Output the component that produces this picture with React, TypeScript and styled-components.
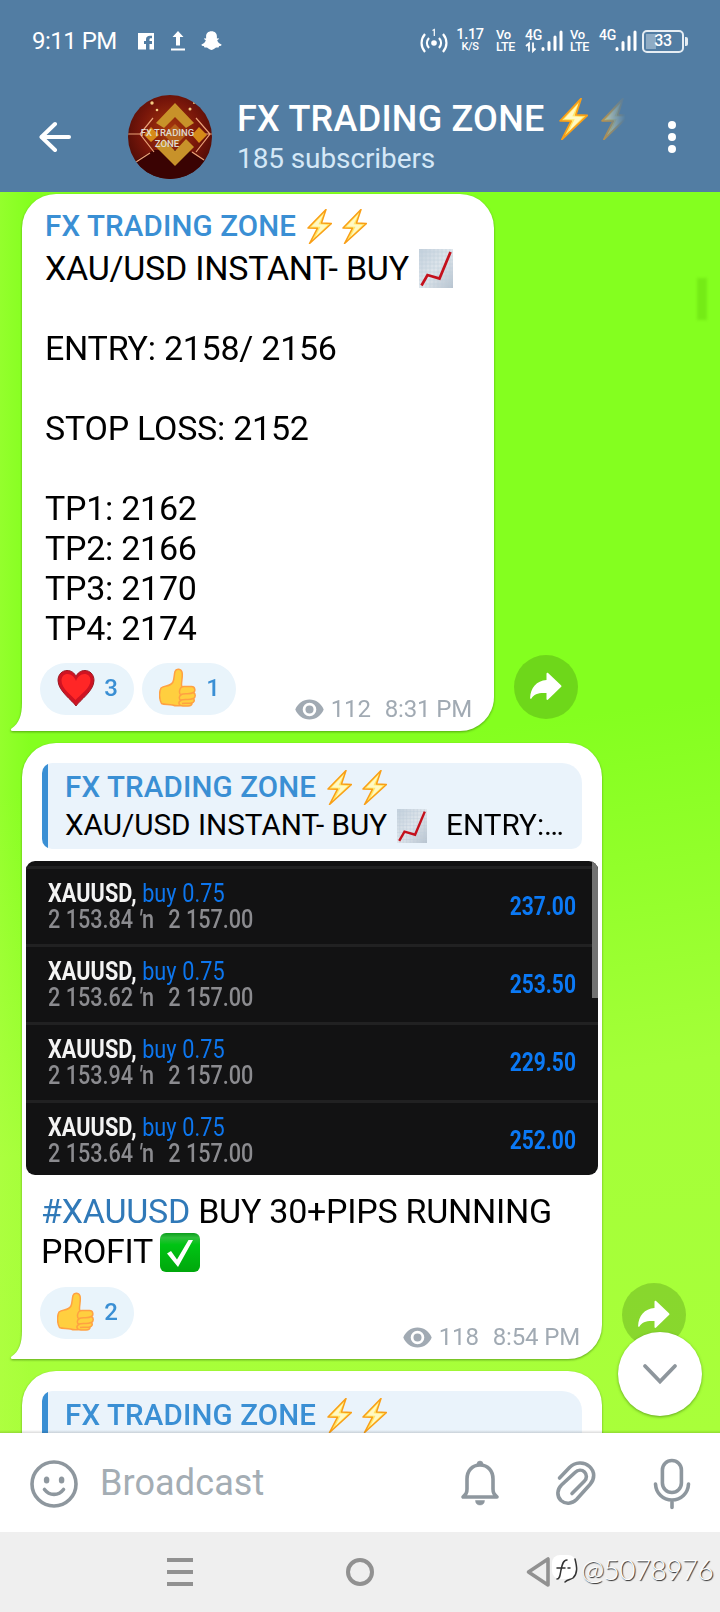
import type { ReactNode } from "react"
import styled, { createGlobalStyle } from "styled-components"

const GlobalStyle = createGlobalStyle`
* { box-sizing: border-box; }
body {
  margin: 0;
  font-family: Roboto, "Liberation Sans", sans-serif;
}
svg { display: block; flex: none; }
`

const Screen = styled.div`
display: flex;
flex-direction: column;
width: 720px;
height: 1612px;
overflow: hidden;
`

/* header */

const Header = styled.header`
height: 192px;
flex: none;
background: #527da3;
color: #fff;
`

const StatusBar = styled.div`
display: flex;
align-items: center;
height: 82px;
padding: 0 36px 0 32px;
`

const Clock = styled.span`
font-size: 24px;
line-height: 28px;
letter-spacing: -0.5px;
width: 105px;
`

const StatusIcons = styled.div`
display: flex;
align-items: center;
gap: 15px;
`

const StatusRight = styled.div`
display: flex;
align-items: center;
margin-left: auto;
height: 26px;
`

const Stack = styled.div<{ $w: number; $ml?: number }>`
display: flex;
flex-direction: column;
width: ${p => p.$w}px;
height: 24px;
margin-left: ${p => p.$ml ?? 0}px;
font-weight: 500;
white-space: nowrap;
`

const StackLine = styled.div<{ $size: number; $center?: boolean }>`
align-self: ${p => p.$center ? "center" : "flex-start"};
font-size: ${p => p.$size}px;
line-height: 12px;
letter-spacing: -0.3px;
`

const Battery = styled.div`
position: relative;
display: flex;
align-items: center;
justify-content: center;
width: 42px;
height: 23px;
margin-left: 5px;
border: 2px solid #e6edf3;
border-radius: 5px;
font-size: 16px;
font-weight: 500;
line-height: 16px;
letter-spacing: -0.3px;
background: linear-gradient(90deg, transparent 2px, #8eabc4 2px, #8eabc4 12px, transparent 12px) content-box;
padding: 2px 0;

&::after {
  content: "";
  position: absolute;
  left: 41px;
  top: 5px;
  width: 3px;
  height: 9px;
  border-radius: 0 2px 2px 0;
  background: #e6edf3;
}
`

const TitleBar = styled.div`
display: flex;
align-items: center;
height: 110px;
padding: 0 44px 0 39px;
`

const AvatarBox = styled.div`
margin: 0 25px 0 57px;
`

const TitleText = styled.div`
flex: 1;
padding-top: 1px;
`

const Title = styled.div`
display: flex;
align-items: center;
font-size: 36px;
font-weight: 500;
line-height: 42px;
letter-spacing: 0.25px;
white-space: nowrap;
`

const TitleBolts = styled.span`
display: flex;
gap: 13px;
margin-left: 14px;
`

const FadedBolt = styled.span`
mask-image: linear-gradient(90deg, rgba(0,0,0,0.65), transparent 85%);
`

const Subtitle = styled.div`
font-size: 28px;
line-height: 38px;
letter-spacing: -0.1px;
color: #d5e8f7;
`

/* messages */

const Chat = styled.main`
position: relative;
flex: none;
display: flex;
flex-direction: column;
gap: 12px;
height: 1241px;
padding: 2px 0 0 22px;
overflow: hidden;
background:
  linear-gradient(90deg, rgba(190,255,80,0.28), transparent 30px),
  linear-gradient(172deg, #84ff1f 0%, #84ff1f 45%, #a4ff38 72%, #a9ff3a 100%);

&::after {
  content: "";
  position: absolute;
  inset: auto 0 0 0;
  height: 3px;
  background: linear-gradient(transparent, rgba(0,0,0,0.14));
}
`

const WallpaperMark = styled.div`
position: absolute;
left: 697px;
top: 86px;
width: 10px;
height: 42px;
background: #70e514;
filter: blur(1.5px);
opacity: 0.75;
`

const MessageRow = styled.div`
display: flex;
align-items: flex-end;
gap: 20px;
flex: none;
`

const Bubble = styled.article<{ $w: number; $h: number }>`
position: relative;
display: flex;
flex-direction: column;
width: ${p => p.$w}px;
height: ${p => p.$h}px;
background: #fff;
border-radius: 34px 34px 34px 0;
filter: drop-shadow(0 1px 1px rgba(30,80,0,0.5));
`

const Tail = styled.svg`
position: absolute;
left: -12px;
bottom: 0;
`

const Author = styled.div`
display: flex;
align-items: center;
height: 40px;
font-size: 29.5px;
font-weight: 500;
line-height: 40px;
letter-spacing: 0.15px;
color: #3a8fd4;
white-space: nowrap;
`

const AuthorBolts = styled.span`
display: flex;
gap: 10px;
margin-left: 11px;
`

const SignalBody = styled.div`
padding: 12px 23px 0;
`

const Line = styled.div`
display: flex;
align-items: center;
height: 40px;
font-size: 34px;
line-height: 40px;
letter-spacing: -0.25px;
color: #000;
white-space: pre;
`

const SignalLines = styled.div`
padding-top: 2px;
`

const InlineEmoji = styled.span<{ $before?: number; $after?: number; $down?: number }>`
padding-top: ${p => p.$down ?? 0}px;
margin: 0 ${p => p.$after ?? 0}px 0 ${p => p.$before ?? 0}px;
`

const Footer = styled.footer`
display: flex;
align-items: flex-end;
margin-top: auto;
padding: 0 22px 4px 18px;
`

const Reaction = styled.button<{ $lift: number }>`
display: flex;
align-items: center;
justify-content: space-between;
width: 94px;
height: 52px;
margin: 0 8px ${p => p.$lift}px 0;
padding: 0 16px 3px 17px;
border: 0;
border-radius: 26px;
background: #e9f4fb;
font: 500 24px/28px Roboto, sans-serif;
color: #3a8fd4;
`

const Meta = styled.div`
display: flex;
align-items: center;
margin-left: auto;
font-size: 24px;
line-height: 36px;
letter-spacing: -0.15px;
color: #a1aab3;
white-space: pre;
`

const Views = styled.span`
margin: 0 14px 0 7px;
`

const ShareButton = styled.button`
display: flex;
align-items: center;
justify-content: center;
width: 64px;
height: 64px;
margin-bottom: 12px;
padding: 0;
border: 0;
border-radius: 50%;
background: rgba(50,100,10,0.26);
`

const Quote = styled.div`
flex: none;
height: 86px;
margin: 20px 20px 0;
padding: 4px 0 0 23px;
border-radius: 10px 20px 10px 10px;
background: linear-gradient(90deg, #3a8fd4 6px, #eaf3fb 6px);
`

const QuoteText = styled.div`
display: flex;
align-items: center;
height: 36px;
font-size: 29.7px;
line-height: 36px;
color: #000;
white-space: pre;
`

const Trades = styled.div`
position: relative;
flex: none;
height: 314px;
margin: 12px 4px 0;
padding-top: 5px;
border-radius: 9px;
overflow: hidden;
background: #121213;
`

const TradeRow = styled.div`
display: flex;
align-items: center;
justify-content: space-between;
height: 78px;
padding: 0 22px;
border-top: 3px solid #212122;
`

const Narrow = styled.div<{ $right?: boolean; $scale: number }>`
transform: scaleX(${p => p.$scale});
transform-origin: ${p => p.$right ? "right" : "left"};
white-space: pre;
`

const TradeName = styled.div`
font-size: 25px;
font-weight: 700;
line-height: 28px;
letter-spacing: 0.1px;
color: #f3f3f3;

span {
  font-weight: 400;
  color: #0d76ee;
}
`

const TradePrices = styled.div`
font-size: 25px;
font-weight: 500;
line-height: 26px;
margin-top: -1px;
color: #8b8b8f;

span { margin-left: 4px; }
`

const TradeProfit = styled.div`
font-size: 25px;
font-weight: 700;
line-height: 28px;
color: #0b79f5;
`

const ScrollThumb = styled.div`
position: absolute;
right: 0;
top: 0;
width: 6px;
height: 137px;
background: #727272;
`

const Caption = styled.div`
padding: 16px 19px 0;
`

const Hashtag = styled.span`
color: #3079b8;
`

const ScrollDown = styled.button`
position: absolute;
right: 18px;
bottom: 17px;
display: flex;
align-items: center;
justify-content: center;
width: 84px;
height: 84px;
padding: 0;
border: 0;
border-radius: 50%;
background: #fff;
box-shadow: 0 1px 3px rgba(30,80,0,0.5);
`

/* bottom bars */

const Composer = styled.div`
display: flex;
align-items: center;
flex: none;
height: 99px;
padding: 0 28px 0 29px;
background: #fff;
`

const Placeholder = styled.div`
flex: 1;
margin-left: 21px;
font-size: 36px;
line-height: 44px;
letter-spacing: 0.1px;
color: #a4adb4;
`

const Tools = styled.div`
display: flex;
align-items: center;
gap: 48px;

svg:last-child { margin-left: 4px; }
`

const NavBar = styled.nav`
display: flex;
align-items: center;
justify-content: space-between;
height: 80px;
flex: none;
padding: 0 168px 0 166px;
background: #efefef;
position: relative;
`

const Watermark = styled.div`
position: absolute;
left: 551px;
top: 19px;
display: flex;
align-items: center;
gap: 3px;
height: 36px;
font-family: Lato, sans-serif;
font-size: 28px;
font-weight: 300;
line-height: 36px;
letter-spacing: -0.6px;
color: #fff;
text-shadow: 1px 1px 1px #222;
white-space: nowrap;
`

const Bolt = ({ w = 25, h = 35 }: { w?: number; h?: number }) => (
  <svg width={w} height={h} viewBox="0 0 25 35" preserveAspectRatio="none">
    <path d="M19 .5 1 19l9.5.2L2.500 34.500 24.500 14.500l-10-.4z" fill="#ffe76a" stroke="#f99f17" strokeWidth="1.500" strokeLinejoin="round" />
    <path d="M16.500 5 4.500 17.500l9 .3-5 10L20.500 16l-9-.8z" fill="#fff9c4" />
  </svg>
)

const ChartEmoji = ({ w, h }: { w: number; h: number }) => (
  <svg width={w} height={h} viewBox="0 0 34 39" preserveAspectRatio="none">
    <defs>
      <linearGradient id="paper" x1="0" y1="0" x2="1" y2="1">
        <stop offset="0" stopColor="#c3d0dc" />
        <stop offset=".5" stopColor="#dfe6ec" />
        <stop offset="1" stopColor="#b7c3cf" />
      </linearGradient>
    </defs>
    <rect width="34" height="39" fill="url(#paper)" />
    <path d="M3 0v39M7 0v39M11 0v39M15 0v39M19 0v39M23 0v39M27 0v39M31 0v39M0 3h34M0 7h34M0 11h34M0 15h34M0 19h34M0 23h34M0 27h34M0 31h34M0 35h34" stroke="#bfcddb" strokeWidth=".5" />
    <path d="M2.500 36.500 8.500 26 20.500 29.500 31.500 3" fill="none" stroke="#c4101c" strokeWidth="2.700" />
  </svg>
)

const CheckEmoji = () => (
  <svg width="40" height="39" viewBox="0 0 40 39">
    <defs>
      <linearGradient id="tick" x1="0" y1="0" x2="0" y2="1">
        <stop offset="0" stopColor="#0c9d1c" />
        <stop offset=".12" stopColor="#2fbf3c" />
        <stop offset=".3" stopColor="#00c414" />
        <stop offset="1" stopColor="#00a70c" />
      </linearGradient>
    </defs>
    <rect width="40" height="39" rx="6" fill="url(#tick)" />
    <path d="M7 20.500 11 18 17 26.500 28.500 7H33L18 34z" fill="#fff" />
  </svg>
)

const Heart = () => (
  <svg width="38" height="38" viewBox="0 0 38 38">
    <path d="M19 37C16 32 1 22 1 11.500 1 5 5.500 1.500 10 1.500c4.500 0 7.500 2.500 9 6 1.500-3.500 4.500-6 9-6s9 3.500 9 10C37 22 22 32 19 37z" fill="#cf1322" stroke="#9c1c25" strokeWidth="1" />
    <path d="M18.500 31C15 26.500 4.500 20 4.500 11.800 4.500 7.500 7 5 10.500 5c4 0 7 3 8.500 7 1.500-4 4.500-7 8.500-7 3.500 0 6 2.500 6 6.500C33.500 19 23 26 18.500 31z" fill="#ff2626" />
  </svg>
)

const Thumb = () => (
  <svg width="37" height="40" viewBox="0 0 37 40">
    <g fill="#ffcf3f" stroke="#ffa142" strokeWidth="1.500" strokeLinejoin="round">
      <path d="M2 20c4-3 9-1 12-6 1.500-4 1-7 2-10.500C17 .5 21.500.5 23 4c1 4-.5 8-.5 13l4 18c-3 3-9 3.500-13 2-4-1-8 0-11-1.500C0 31 0 24 2 20z" />
      <path d="M25 18.500h7.500c4 0 4 5 2 6 2.500 1.500 2 5 0 6 1.500 2 .5 4-1.500 4.500 0 2.500-2 3-4 3h-5c-5 0-5-4.500-2-5.500-2.500-1.500-2-4.500 0-5.500-2.500-1.500-2-8.500 3-8.500z" />
      <path d="M22 26.500c4-2 8 .5 12.500-2M22 32c4-1.500 8 .5 12-1.500M23 35.500c4-1 7 .5 10-.5" fill="none" />
    </g>
  </svg>
)

const Eye = () => (
  <svg width="29" height="21" viewBox="0 0 29 21">
    <path fillRule="evenodd" fill="#a1aab3" d="M14.500.5C8 .5 2.700 4.500.3 10.500c2.400 6 7.700 10 14.200 10s11.800-4 14.200-10C26.300 4.500 21 .5 14.500.5zm0 3.200a6.800 6.800 0 1 1 0 13.600 6.800 6.800 0 0 1 0-13.600z" />
    <circle cx="14.500" cy="10.500" r="4" fill="#a1aab3" />
  </svg>
)

const ShareArrow = () => (
  <svg width="34" height="30" viewBox="0 0 34 30">
    <path d="M17.500 1.800c0-1 .9-1.300 1.600-.7L32 13.200c.6.600.6 1.300 0 1.900L19.100 27.600c-.7.600-1.600.3-1.600-.7V21C10 20.500 5 21.700 2.600 26.300c-.5.900-1.500.7-1.500-.3C1.500 15.500 7.500 8.800 17.500 7.900z" fill="#fff" />
  </svg>
)

const Signal = () => (
  <svg width="22" height="22" viewBox="0 0 22 22" stroke="#fff" strokeWidth="3" strokeLinecap="round">
    <path d="M2 18.500v1M8 12.500v7M14 7v12.500M20 2v17.500" />
  </svg>
)

const Avatar = () => (
  <svg width="84" height="84" viewBox="0 0 84 84">
    <defs>
      <clipPath id="disc"><circle cx="42" cy="42" r="42" /></clipPath>
      <radialGradient id="glow" cx=".5" cy=".42" r=".58">
        <stop offset="0" stopColor="#a8380c" />
        <stop offset=".6" stopColor="#78160a" />
        <stop offset="1" stopColor="#4e0c06" />
      </radialGradient>
    </defs>
    <g clipPath="url(#disc)">
      <rect width="84" height="84" fill="url(#glow)" />
      <path d="M0 70 26 55h34l24 16v13H0z" fill="#3a0303" />
      <path d="M0 39h12M72 39h12M25 23 12 39 26 57M68 23 82 39 68 57M8 67 22 58M76 65 64 57" fill="none" stroke="#eba379" strokeWidth="1.200" />
      <path d="M47 8 66 28 58 33 47 22 36 33 28 28z" fill="#c8922a" />
      <path d="M47 71 28 52 36 44 47 56 58 44 66 52z" fill="#c8922a" />
      <path d="M47 29 58 40 47 51 36 40z" fill="#b5611a" />
      <path d="M23 32 31 40 23 47 16 40zM71 32 79 40 71 48 64 40z" fill="#d68a18" />
      <g fill="#f5cd84">
        <circle cx="24" cy="8" r="1.700" /><circle cx="29" cy="15" r="1.300" />
        <circle cx="62" cy="14" r="1.500" /><circle cx="66" cy="8" r="1" />
      </g>
    </g>
    <g fill="#dedad2" fontFamily="Roboto, sans-serif" fontSize="9.500" fontWeight="500" textAnchor="middle">
      <text x="39.500" y="41">FX TRADING</text>
      <text x="39" y="52">ZONE</text>
    </g>
  </svg>
)

const AuthorName = () => (
  <Author>
    FX TRADING ZONE
    <AuthorBolts><Bolt /><Bolt /></AuthorBolts>
  </Author>
)

const ReplyQuote = () => (
  <Quote>
    <AuthorName />
    <QuoteText>
      {"XAU/USD INSTANT- BUY "}
      <InlineEmoji $before={3} $after={4} $down={1}><ChartEmoji w={30} h={34} /></InlineEmoji>
      {"  ENTRY:…"}
    </QuoteText>
  </Quote>
)

type MetaInfoProps = {
  views: number
  time: string
}

const MetaInfo = ({ views, time }: MetaInfoProps) => (
  <Meta>
    <Eye />
    <Views>{views}</Views>
    {time}
  </Meta>
)

type MessageProps = {
  w: number
  h: number
  tail?: boolean
  share?: boolean
  children: ReactNode
}

const Message = ({ w, h, tail = true, share = true, children }: MessageProps) => (
  <MessageRow>
    <Bubble $w={w} $h={h}>
      {tail &&
        <Tail width="14" height="28" viewBox="0 0 14 28">
          <path d="M12 0C12 12 9 21 1.500 25.500.300 26.500.800 28 2.500 28H14V0z" fill="#fff" />
        </Tail>}
      {children}
    </Bubble>
    {share && <ShareButton aria-label="Share"><ShareArrow /></ShareButton>}
  </MessageRow>
)

const signal = [
  "",
  "ENTRY: 2158/ 2156",
  "",
  "STOP LOSS: 2152",
  "",
  "TP1: 2162",
  "TP2: 2166",
  "TP3: 2170",
  "TP4: 2174",
]

const trades = [
  { open: "2 153.84", profit: "237.00" },
  { open: "2 153.62", profit: "253.50" },
  { open: "2 153.94", profit: "229.50" },
  { open: "2 153.64", profit: "252.00" },
]

export default function App() {
  return (
    <>
      <GlobalStyle />
      <Screen>
        <Header>
          <StatusBar>
            <Clock>9:11 PM</Clock>
            <StatusIcons>
              <svg width="18" height="17" viewBox="0 0 18 17">
                <path fill="#fff" fillRule="evenodd" d="M1 0h16v16.500h-4.500V11h2.500V8h-2.500V6.500c0-1 .5-1.300 1.500-1.300h1V2.800h-2C10.500 2.800 9 4.200 9 6.200V8H7v3h2v5.500H1z" />
              </svg>
              <svg width="16" height="20" viewBox="0 0 16 20">
                <path fill="#fff" d="M8 0 13.500 6H10v8.500H6V6H2.500zM1 17.500h14v2H1z" />
              </svg>
              <svg width="21" height="20" viewBox="0 0 21 20">
                <path fill="#fff" d="M10.500.3c3.500 0 5.400 2.300 5.400 5v2.200l1.700-.3c.8.700-.3 1.500-1.400 2 .7 2.200 2.300 3.600 4.300 4.200.3 1-1.200 1.500-2.300 1.700l-.7 1.500c-2.200-.4-3 .2-4.200 1.200-1.600 1.500-4 1.500-5.600 0-1.200-1-2-1.600-4.200-1.200l-.7-1.500C1.700 14.900.2 14.400.5 13.400c2-.6 3.600-2 4.300-4.200-1.100-.5-2.200-1.300-1.400-2l1.700.3V5.300c0-2.700 1.900-5 5.400-5z" />
              </svg>
            </StatusIcons>
            <StatusRight>
              <svg width="28" height="27" viewBox="0 0 28 27" fill="none" stroke="#fff" strokeWidth="2.200">
                <circle cx="14" cy="15" r="2.800" fill="#fff" stroke="none" />
                <path d="M9 10c-2.700 3-2.700 7 0 10M19 10c2.700 3 2.700 7 0 10M5 6c-4.600 5.500-4.600 12.500 0 18M23 6c4.600 5.500 4.600 12.500 0 18" />
                <path d="M12.500 2.500 14.300 1.500V8" strokeWidth="1.200" />
              </svg>
              <Stack $w={28} $ml={8}>
                <StackLine $size={14.5} $center>1.17</StackLine>
                <StackLine $size={11} $center>K/S</StackLine>
              </Stack>
              <Stack $w={21} $ml={12}>
                <StackLine $size={13}>Vo</StackLine>
                <StackLine $size={12.5}>LTE</StackLine>
              </Stack>
              <Stack $w={16} $ml={8}>
                <StackLine $size={14}>4G</StackLine>
                <svg width="12" height="12" viewBox="0 0 12 12" fill="none" stroke="#fff" strokeWidth="1.800">
                  <path d="M1 5 4 2.500V10.500M8 1.500V10L10.500 7.500" />
                </svg>
              </Stack>
              <Signal />
              <Stack $w={21} $ml={7}>
                <StackLine $size={13}>Vo</StackLine>
                <StackLine $size={12.5}>LTE</StackLine>
              </Stack>
              <Stack $w={16} $ml={8}>
                <StackLine $size={14}>4G</StackLine>
              </Stack>
              <Signal />
              <Battery>33</Battery>
            </StatusRight>
          </StatusBar>
          <TitleBar>
            <svg width="32" height="32" viewBox="0 0 32 32" fill="none" stroke="#fff" strokeWidth="4" strokeLinecap="round" strokeLinejoin="round">
              <path d="M16 3 2.500 16 16 29" />
              <path d="M3 16h27" />
            </svg>
            <AvatarBox><Avatar /></AvatarBox>
            <TitleText>
              <Title>
                FX TRADING ZONE
                <TitleBolts>
                  <Bolt w={29} h={42} />
                  <FadedBolt><Bolt w={29} h={42} /></FadedBolt>
                </TitleBolts>
              </Title>
              <Subtitle>185 subscribers</Subtitle>
            </TitleText>
            <svg width="8" height="32" viewBox="0 0 8 32" fill="#fff">
              <circle cx="4" cy="4" r="4" />
              <circle cx="4" cy="16" r="4" />
              <circle cx="4" cy="28" r="4" />
            </svg>
          </TitleBar>
        </Header>

        <Chat>
          <WallpaperMark />
          <Message w={472} h={537}>
            <SignalBody>
              <AuthorName />
              <SignalLines>
                <Line>
                  {"XAU/USD INSTANT- BUY "}
                  <InlineEmoji $before={2}><ChartEmoji w={34} h={39} /></InlineEmoji>
                </Line>
                {signal.map((text, i) => <Line key={i}>{text}</Line>)}
              </SignalLines>
            </SignalBody>
            <Footer>
              <Reaction $lift={12}><Heart />3</Reaction>
              <Reaction $lift={12}><Thumb />1</Reaction>
              <MetaInfo views={112} time="8:31 PM" />
            </Footer>
          </Message>

          <Message w={580} h={616}>
            <ReplyQuote />
            <Trades>
              {trades.map(({ open, profit }) => (
                <TradeRow key={open}>
                  <Narrow $scale={0.865}>
                    <TradeName>XAUUSD, <span>buy 0.75</span></TradeName>
                    <TradePrices>{open} <i>′</i>n<span>  2 157.00</span></TradePrices>
                  </Narrow>
                  <Narrow $scale={0.84} $right>
                    <TradeProfit>{profit}</TradeProfit>
                  </Narrow>
                </TradeRow>
              ))}
              <ScrollThumb />
            </Trades>
            <Caption>
              <Line><Hashtag>#XAUUSD</Hashtag> BUY 30+PIPS RUNNING</Line>
              <Line>{"PROFIT "}<InlineEmoji $before={-1} $down={3}><CheckEmoji /></InlineEmoji></Line>
            </Caption>
            <Footer>
              <Reaction $lift={16}><Thumb />2</Reaction>
              <MetaInfo views={118} time="8:54 PM" />
            </Footer>
          </Message>

          <Message w={580} h={300} tail={false} share={false}>
            <ReplyQuote />
          </Message>

          <ScrollDown aria-label="Scroll to latest">
            <svg width="36" height="22" viewBox="0 0 36 22" fill="none" stroke="#8e969c" strokeWidth="3.800" strokeLinecap="round">
              <path d="M3 3 18 18.500 33 3" />
            </svg>
          </ScrollDown>
        </Chat>

        <Composer>
          <svg width="50" height="50" viewBox="0 0 50 50" fill="none" stroke="#8e979e" strokeWidth="3.600">
            <circle cx="25" cy="26" r="22" />
            <path d="M15.500 31.500c5 6.500 14 6.500 19 0" strokeLinecap="round" />
            <ellipse cx="17.600" cy="22" rx="2.800" ry="3.600" fill="#8e979e" stroke="none" />
            <ellipse cx="32.600" cy="22" rx="2.800" ry="3.600" fill="#8e979e" stroke="none" />
          </svg>
          <Placeholder>Broadcast</Placeholder>
          <Tools>
            <svg width="48" height="52" viewBox="0 0 48 52" fill="none" stroke="#8e979e" strokeWidth="3.600">
              <path d="M7 40h34c-3-3-4-4-4-8V22c0-8-5-14-13-14S11 14 11 22v10c0 4-1 5-4 8z" strokeLinejoin="round" />
              <path d="M21 7a3 3 0 0 1 6 0zM19.500 43.500h9c0 3-2 4.500-4.500 4.500s-4.500-1.500-4.500-4.500z" fill="#8e979e" strokeWidth=".5" />
            </svg>
            <svg width="48" height="52" viewBox="0 0 48 52" fill="none" stroke="#8e979e" strokeWidth="3.600" strokeLinecap="round">
              <path d="M7.500 21 17.500 10.500C23 5 32 4.500 37.500 9.500S43 22 38 27.500L24.500 42.500c-4.500 4.500-11 5-15.500 1C4.500 39 5 32.500 9.500 28L23 15.500c3-3 7-3 9.500-.5s2.500 6.500 0 9L20 36.500" />
            </svg>
            <svg width="40" height="54" viewBox="0 0 40 54" fill="none" stroke="#8e979e" strokeWidth="3.600" strokeLinecap="round">
              <rect x="10.400" y="4.500" width="19" height="32" rx="9.500" />
              <path d="M3.500 28C4 37.500 11 44 20 44S36 37.500 36.500 28M20 44.500v7" />
            </svg>
          </Tools>
        </Composer>

        <NavBar>
          <svg width="28" height="28" viewBox="0 0 28 28" fill="#919191">
            <path d="M1 0h26v4H1zM1 12h26v4H1zM1 24h26v4H1z" />
          </svg>
          <svg width="28" height="28" viewBox="0 0 28 28" fill="none" stroke="#919191" strokeWidth="4">
            <circle cx="14" cy="14" r="12" />
          </svg>
          <svg width="26" height="32" viewBox="0 0 26 32" fill="none" stroke="#919191" strokeWidth="3.600" strokeLinejoin="round">
            <path d="M22 3v26L2.500 16z" />
          </svg>
          <Watermark>
            <svg width="27" height="30" viewBox="0 0 27 30">
              <rect x="1" y="1" width="24" height="24" rx="8" fill="#fff" />
              <path d="M6 25c3 0 3-4 4-9s2-10 6-10M6 14h8M17 14h2M24 5c2 8 3 14-2 19-3 2-5 1-8 4" fill="none" stroke="#333" strokeWidth="1.500" strokeLinecap="round" />
            </svg>
            @5078976
          </Watermark>
        </NavBar>
      </Screen>
    </>
  )
}
